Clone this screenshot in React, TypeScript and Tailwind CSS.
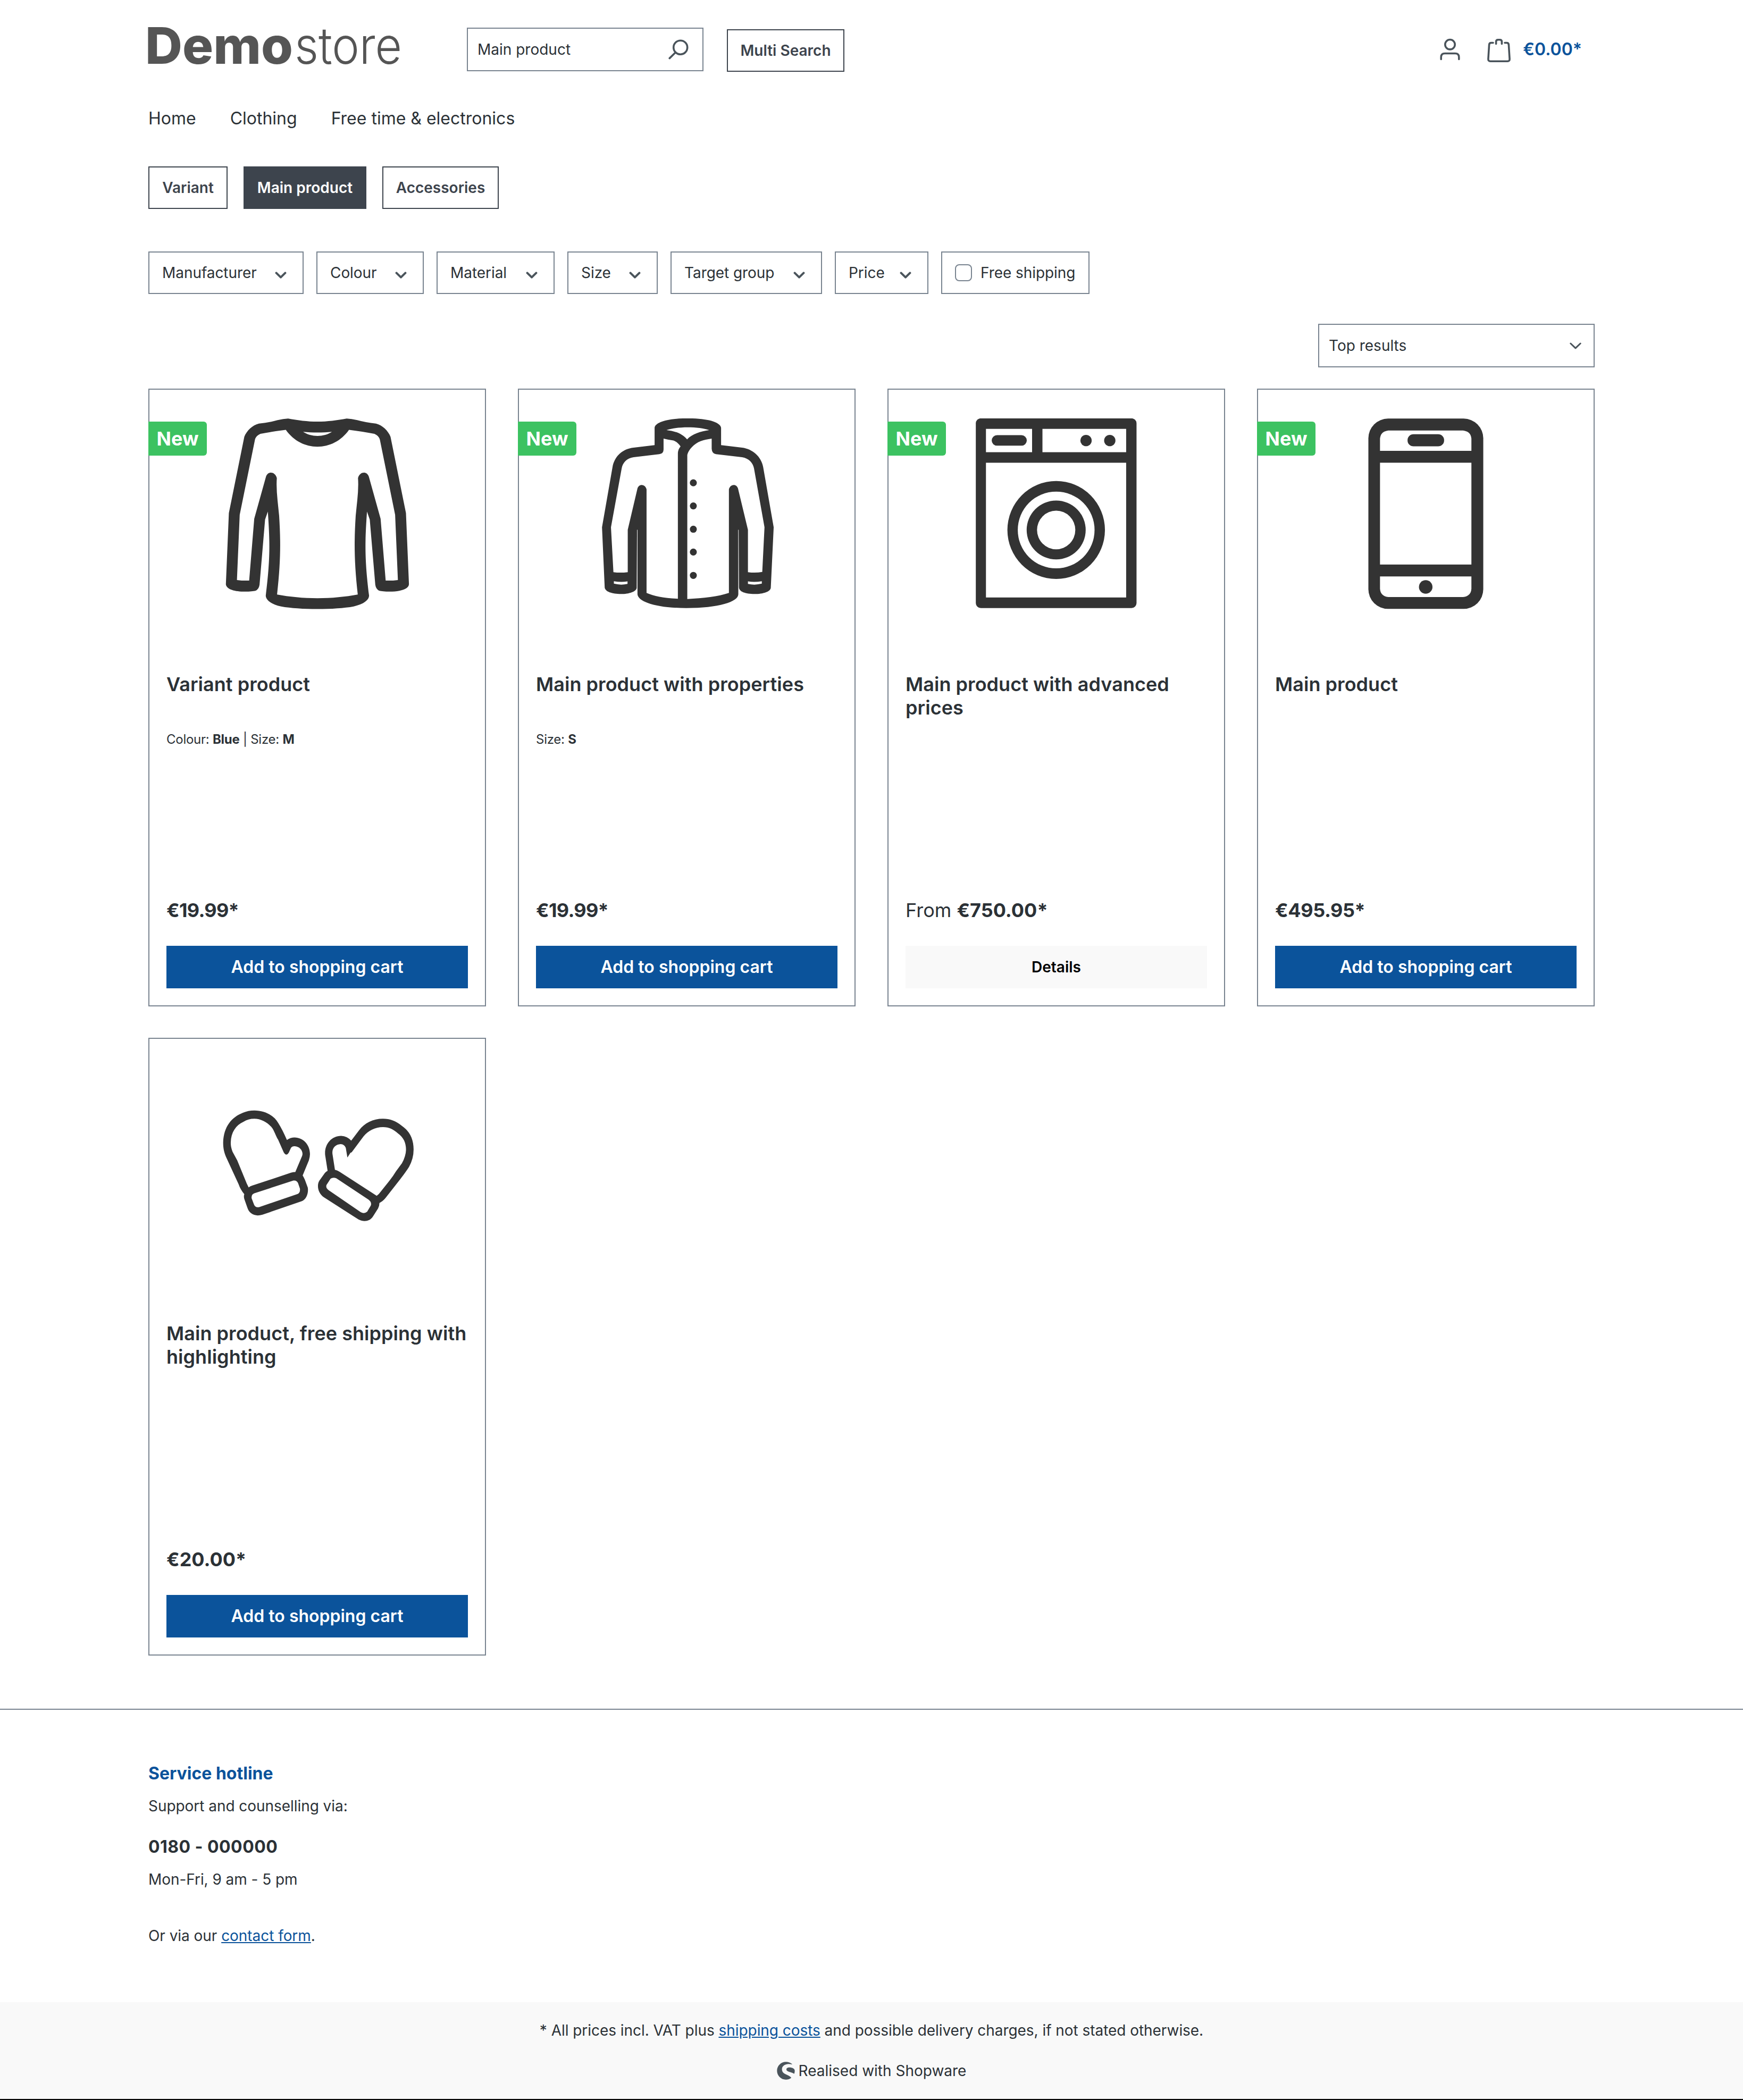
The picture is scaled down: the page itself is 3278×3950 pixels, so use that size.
import React from "react";

const INK = "#333333";

function Logo() {
  return (
    <svg width="476" height="96" viewBox="0 0 476 96" className="block overflow-visible" fill="#555555">
      <text x="-6" y="70" fontSize="95" fontWeight="850" textLength="278" lengthAdjust="spacingAndGlyphs">
        Demo
      </text>
      <text x="275" y="70" fontSize="95" fontWeight="320" textLength="202" lengthAdjust="spacingAndGlyphs">
        store
      </text>
    </svg>
  );
}

function SearchIcon() {
  return (
    <svg width="44" height="44" viewBox="0 0 44 44" fill="none" stroke="#4a545b" strokeWidth="3.6" strokeLinecap="round">
      <circle cx="25.7" cy="18.2" r="13" />
      <path d="M16 28 L5.2 38.6" />
    </svg>
  );
}

function UserIcon() {
  return (
    <svg width="44" height="44" viewBox="0 0 44 44" fill="none" stroke="#4a545b" strokeWidth="3.6" strokeLinecap="round">
      <circle cx="22" cy="11.7" r="9.2" />
      <path d="M5.2 39.5 V35.5 Q5.2 28.5 12.2 28.5 H31.8 Q38.8 28.5 38.8 35.5 V39.5" />
    </svg>
  );
}

function BagIcon() {
  return (
    <svg width="44" height="46" viewBox="0 0 44 46" fill="none" stroke="#4a545b" strokeWidth="3.6" strokeLinecap="round" strokeLinejoin="round">
      <path d="M11 8.5 H7.5 Q3.8 8.5 3.6 12.2 L1.9 39 Q1.8 43.2 5.8 43.2 H38.2 Q42.2 43.2 42.1 39 L40.4 12.2 Q40.2 8.5 36.5 8.5 H33" />
      <path d="M16.6 10.5 V6.5 Q16.6 2.8 20.3 2.8 H23.7 Q27.4 2.8 27.4 6.5 V10.5" />
    </svg>
  );
}

function ShopwareIcon() {
  return (
    <svg width="34" height="34" viewBox="0 0 34 34" fill="#4a545b">
      <path d="M28.5 4.2 C25.3 1.7 21.3 0.3 17 0.3 C7.8 0.3 0.3 7.8 0.3 17 C0.3 26.2 7.8 33.7 17 33.7 C20.8 33.7 24 32.6 26.6 30.7 C27 30.3 26.8 29.8 26.5 29.3 C23.8 26.4 20 25.2 16.5 23.5 C12.5 21.5 9.6 19 9.6 14 C9.6 7.6 16 4.2 22 4.2 C24.3 4.2 26.3 4.6 28.2 5.1 Q29 5 28.5 4.2 Z" />
      <path d="M32.5 22.8 C33.4 21 33.8 18.7 33.6 16.2 C33.3 14.5 32.6 13.7 31.5 12.9 C29 11.2 26 10.8 23.5 10.8 C20.5 10.8 18 12 18 14.5 C18 17.5 21.5 18.4 25 19.6 C28 20.6 30.6 21.4 32.5 22.8 Z" />
    </svg>
  );
}

function Chevron({ thin = false }: { thin?: boolean }) {
  return (
    <svg
      width="22"
      height="13"
      viewBox="0 0 22 13"
      fill="none"
      stroke="#4a545b"
      strokeWidth={thin ? 3 : 4}
      strokeLinecap="round"
      strokeLinejoin="round"
      className="block shrink-0"
    >
      <path d={thin ? "M1.8 2 L11 10.8 L20.2 2" : "M2.6 2.4 L11 10.6 L19.4 2.4"} />
    </svg>
  );
}

function Picture({ viewBox, children }: { viewBox: string; children: React.ReactNode }) {
  return (
    <svg viewBox={viewBox} preserveAspectRatio="none" fill={INK} fillRule="evenodd" className="block h-[360px] w-[567px]">
      {children}
    </svg>
  );
}

function Shirt() {
  return (
    <Picture viewBox="122.2 367.7 1307.5 672">
      <path
        d="M650 368 C692 374 733 379 777 379 C821 379 862 374 904 368 Q925 369 950 374 Q985 382 1031 386 C1059 391 1084 412 1094 432 L1161 700 L1174 950 C1172 968 1135 976 1091 976 C1069 976 1054 974 1046 973 Q1031 968 1028 952 L1004 723 L992 695 C983 800 981 860 1001 990 C1001 1005 979 1020 934 1028 C855 1040 699 1040 620 1028 C575 1020 553 1005 553 990 C573 860 571 800 562 695 L550 723 L526 952 Q523 968 508 973 C500 974 485 976 463 976 C420 976 382 968 380 950 L393 700 L460 432 C470 412 495 391 523 386 Q569 382 604 374 Q629 369 650 368 Z
        M640 408 Q580 414 530 422 C518 426 508 434 506 443 L440 706 L428 935 Q455 938 481 937 L503 720 L554 572 C562 553 592 553 601 577 C597 620 606 665 611 710 C618 800 618 870 602 986 C655 994 715 999 777 999 C839 999 899 994 952 986 C936 870 936 800 943 710 C948 665 957 620 953 577 C962 553 992 553 1000 572 L1051 720 L1073 937 Q1099 938 1126 935 L1114 706 L1048 443 C1046 434 1036 426 1024 422 Q974 414 914 408 C879 448 829 467 777 467 C725 467 675 448 640 408 Z
        M715 415 C755 418 800 418 840 415 C805 434 750 434 715 415 Z"
      />
    </Picture>
  );
}

function Jacket() {
  return (
    <Picture viewBox="114 184.3 1347 762.8">
      <path
        d="M644 222 C646 200 700 184 792 184 C884 184 939 200 941 222 L941 291 L1035 301 C1080 306 1120 335 1129 378 L1176 618 L1163 860 C1160 875 1130 884 1090 884 C1050 884 1022 875 1021 858 L1019.5 628 L1017.5 628 L1018 885 C1018 915 930 940 785 940 C650 940 570 915 567.5 885 L567.5 628 L565.5 628 L564 860 C561 875 530 884 494 884 C455 884 423 875 421 858 L409 618 L456 378 C465 335 500 306 550 301 L644 291 Z
        M684 265 L684 308 Q684 324 665 327 L550 339 C520 343 502 360 497 383 L449 618 L460 797 Q490 801 524 797 L524 628 L567 465 C572 444 602 444 608 467 L608 880 C640 893 690 901 748 903 L748 325 C748 312 754 302 760 296 C750 284 740 276 728 272 Q705 270 684 265 Z
        M899 265 L899 305 Q900 324 918 327 L1035 339 C1065 343 1083 362 1088 383 L1135 618 L1125 796 Q1095 801 1061 797 L1061 628 L1017 465 C1012 444 982 444 976 467 L976 880 C930 894 860 902 790 904 L790 330 C795 310 820 285 850 275 Q870 269 899 265 Z
        M697 231 C745 216 840 216 888 231 C850 236 812 246 789 268 C766 244 735 235 697 231 Z
        M462 833 Q492 838 523 834 L523 844 Q492 850 462 843 Z
        M1061 834 Q1092 838 1123 833 L1123 843 Q1092 850 1061 844 Z"
      />
      {[441, 533, 626, 717, 810].map((y) => (
        <ellipse key={y} cx="817" cy={y} rx="15.5" ry="14" />
      ))}
    </Picture>
  );
}

function Washer() {
  return (
    <Picture viewBox="122.2 184.3 1307.5 762.8">
      <rect x="427" y="184" width="697" height="756" rx="22" ry="20" />
      <g fill="#fff">
        <rect x="471" y="226" width="200" height="93" />
        <rect x="716" y="226" width="363" height="93" />
        <rect x="471" y="361" width="608" height="537" />
      </g>
      <rect x="496" y="251" width="152" height="42" rx="23" ry="21" />
      <ellipse cx="905" cy="272.5" rx="24.5" ry="22.5" />
      <ellipse cx="1008" cy="272.5" rx="24.5" ry="22.5" />
      <ellipse cx="775.5" cy="629" rx="211.5" ry="195" />
      <ellipse cx="775.5" cy="629" rx="166.5" ry="153" fill="#fff" />
      <ellipse cx="775.5" cy="629" rx="128" ry="117.5" />
      <ellipse cx="775.5" cy="629" rx="83" ry="77" fill="#fff" />
    </Picture>
  );
}

function Phone() {
  return (
    <Picture viewBox="130 441.3 1270 806.4">
      <rect x="523" y="442" width="484" height="802" rx="83" />
      <g fill="#fff">
        <path d="M572 578 V527 Q574 496 607 492 H922 Q955 496 957 527 V578 Z" />
        <rect x="572" y="628" width="385" height="429" />
        <path d="M572 1107 V1159 Q574 1190 607 1194 H922 Q955 1190 957 1159 V1107 Z" />
      </g>
      <rect x="688" y="508" width="154" height="51" rx="25" />
      <circle cx="764.5" cy="1151.5" r="28.5" />
    </Picture>
  );
}

function Mittens() {
  return (
    <Picture viewBox="103.9 804.8 1111.3 830.2">
      <path
        d="M428 991 C467 991 500 1013 516 1045 Q532 1075 548 1119 C558 1111 567 1108 576 1108 C608 1108 633 1140 633 1180 Q633 1192 629 1207 L606 1273 Q610 1280 614 1291 L625 1326 C628 1350 620 1378 602 1385 L458 1443 C430 1453 409 1439 402 1412 L391 1375 Q388 1362 391 1354 Q377 1335 370 1311 L323 1191 C315 1168 313 1150 313 1130 C315 1060 345 1020 386 1001 Q405 991 428 991 Z
        M428 1027 C455 1027 485 1048 498 1075 C508 1100 512 1112 515 1116 L536 1172 Q546 1192 555 1174 L563 1153 Q568 1145 577 1146 C597 1147 610 1170 604 1188 L579 1258 Q572 1258 563 1261 L420 1317 Q412 1320 407 1325 Q403 1315 400 1308 L365 1208 L348 1171 C343 1155 341 1145 341 1130 C342 1085 360 1055 388 1040 Q405 1027 428 1027 Z
        M572 1295 L428 1350 Q416 1355 418 1372 L427 1400 Q432 1414 446 1410 L585 1354 Q598 1350 596 1330 L589 1306 Q584 1293 572 1295 Z"
      />
      <path
        d="M902 1027 C928 1027 950 1037 970 1056 C1000 1080 1015 1115 1015 1160 Q1015 1200 998 1236 Q985 1260 965 1290 L912 1370 Q902 1385 889 1392 Q889 1405 884 1416 L864 1453 C853 1472 832 1476 812 1464 L685 1368 C662 1350 657 1315 668 1295 L688 1262 Q692 1257 698 1253 L689 1185 C685 1140 710 1102 748 1101 Q770 1102 785 1122 L814 1077 C835 1045 865 1027 902 1027 Z
        M902 1063 C925 1063 940 1073 957 1090 C978 1108 987 1130 987 1162 Q986 1190 972 1220 L950 1255 Q940 1275 925 1297 L887 1353 L879 1361 L742 1257 Q734 1250 725 1248 L716 1180 C713 1155 727 1138 746 1137 Q760 1138 765 1153 L771 1195 L782 1175 L787 1172 L830 1104 C848 1078 873 1063 902 1063 Z
        M709 1287 L694 1314 Q690 1326 702 1337 L820 1432 Q833 1441 844 1430 L857 1404 Q862 1390 849 1378 L730 1285 Q718 1280 709 1287 Z"
      />
    </Picture>
  );
}

type Product = {
  name: string;
  picture: React.ReactNode;
  isNew?: boolean;
  variant?: React.ReactNode;
  from?: boolean;
  price: string;
  priceTracking?: string;
};

const products: Product[] = [
  {
    name: "Variant product",
    picture: <Shirt />,
    isNew: true,
    variant: (
      <>
        Colour: <b>Blue</b> | Size: <b>M</b>
      </>
    ),
    price: "€19.99*",
    priceTracking: "tracking-[-0.7px]",
  },
  {
    name: "Main product with properties",
    picture: <Jacket />,
    isNew: true,
    variant: (
      <>
        Size: <b>S</b>
      </>
    ),
    price: "€19.99*",
    priceTracking: "tracking-[-0.7px]",
  },
  { name: "Main product with advanced prices", picture: <Washer />, isNew: true, from: true, price: "€750.00*" },
  {
    name: "Main product",
    picture: <Phone />,
    isNew: true,
    price: "€495.95*",
    priceTracking: "tracking-[-0.4px]",
  },
  { name: "Main product, free shipping with highlighting", picture: <Mittens />, price: "€20.00*" },
];

function ProductCard({ product }: { product: Product }) {
  return (
    <article className="relative flex h-[1162px] flex-col border-2 border-[#798490] px-8 pt-[54px] pb-8">
      {product.isNew && (
        <span className="absolute top-[60px] -left-0.5 flex h-16 w-[110px] items-center justify-center rounded-r-[6px] bg-[#3cc261] text-[36px] font-bold text-white">
          New
        </span>
      )}
      {product.picture}
      <h2 className="mt-[118px] h-[88px] text-[36px] leading-[44px] font-semibold tracking-[0.04px]">{product.name}</h2>
      <p className="mt-5 text-[24px] leading-9 tracking-[-0.26px]">{product.variant}</p>
      <p className="mt-auto text-[36px] leading-[54px] tracking-normal">
        {product.from && "From "}
        <b className={product.priceTracking}>{product.price}</b>
      </p>
      {product.from ? (
        <button className="mt-[40px] h-20 shrink-0 bg-[#f9f9f9] text-[28px] font-semibold text-black">Details</button>
      ) : (
        <button className="mt-[40px] h-20 shrink-0 bg-[#0b539b] text-[32px] font-semibold text-white">
          Add to shopping cart
        </button>
      )}
    </article>
  );
}

const filters = [
  { label: "Manufacturer", width: "w-[292px]" },
  { label: "Colour", width: "w-[202px]" },
  { label: "Material", width: "w-[222px]" },
  { label: "Size", width: "w-[170px]" },
  { label: "Target group", width: "w-[285px]" },
  { label: "Price", width: "w-[176px]" },
];

export default function App() {
  return (
    <div className="flex h-[3950px] w-[3278px] flex-col bg-white font-['Inter',sans-serif] text-[28px] leading-[42px] text-[#2b3136]">
      <div className="mx-auto w-[2720px]">
        <header className="flex h-[152px] items-start pt-[50px]">
          <Logo />
          <div className="mt-0.5 ml-[123px] flex h-[82px] w-[445px] items-center justify-between border-2 border-[#798490] pr-[23px] pl-[18px]">
            <span>Main product</span>
            <SearchIcon />
          </div>
          <button className="mt-[5px] ml-[44px] h-20 w-[221px] border-2 border-[#3d444d] font-semibold text-[#3d444d]">
            Multi Search
          </button>
          <div className="mt-[22px] mr-[24px] ml-auto flex items-start">
            <UserIcon />
            <div className="w-[48px]" />
            <BagIcon />
            <span className="ml-[23px] text-[32px] leading-[42px] font-semibold text-[#0b539b]">€0.00*</span>
          </div>
        </header>
        <nav className="flex h-[161px] items-start gap-16 pt-[47px] text-[32px] leading-12">
          <a>Home</a>
          <a>Clothing</a>
          <a>Free time &amp; electronics</a>
        </nav>
        <div className="flex h-20 gap-[30px] font-semibold text-[#3d444d]">
          <button className="w-[149px] border-2 border-[#3d444d]">Variant</button>
          <button className="w-[231px] bg-[#3d444d] text-white">Main product</button>
          <button className="w-[219px] border-2 border-[#3d444d]">Accessories</button>
        </div>
        <div className="mt-20 flex h-20 gap-6">
          {filters.map((f) => (
            <div
              key={f.label}
              className={`flex items-center justify-between border-2 border-[#798490] pr-[30px] pl-6 tracking-[-0.06px] whitespace-nowrap ${f.width}`}
            >
              <span>{f.label}</span>
              <span className="pt-[8px]">
                <Chevron />
              </span>
            </div>
          ))}
          <label className="flex w-[279px] items-center gap-4 border-2 border-[#798490] pl-6 tracking-[-0.06px] whitespace-nowrap">
            <span className="block size-8 rounded-[8px] border-2 border-[#798490]" />
            Free shipping
          </label>
        </div>
        <div className="mt-14 flex justify-end">
          <div className="flex h-[82px] w-[520px] items-center justify-between border-2 border-[#798490] pr-[23px] pl-[18px]">
            <span>Top results</span>
            <Chevron thin />
          </div>
        </div>
        <main className="mt-10 grid grid-cols-4 gap-x-[60px] gap-y-[59px]">
          {products.map((p) => (
            <ProductCard key={p.name} product={p} />
          ))}
        </main>
      </div>
      <footer className="mt-[100px] flex flex-1 flex-col border-t-2 border-[#798490] tracking-[-0.05px]">
        <div className="mx-auto h-[550px] w-[2720px] pt-[96px]">
          <h3 className="text-[32px] leading-12 font-bold tracking-normal text-[#0b539b]">Service hotline</h3>
          <p className="mt-4">Support and counselling via:</p>
          <p className="mt-8 text-[32px] leading-12 font-bold tracking-[0.45px]">0180 - 000000</p>
          <p className="mt-4">Mon-Fri, 9 am - 5 pm</p>
          <p className="mt-16">
            Or via our <a className="text-[#0b539b] underline">contact form</a>.
          </p>
        </div>
        <div className="flex flex-1 flex-col items-center border-b-2 border-black bg-[#f9f9f9] pt-[32px]">
          <p>
            * All prices incl. VAT plus <a className="text-[#0b539b] underline">shipping costs</a> and possible delivery
            charges, if not stated otherwise.
          </p>
          <p className="mt-[34px] flex items-center gap-[7px] tracking-normal">
            <ShopwareIcon />
            Realised with Shopware
          </p>
        </div>
      </footer>
    </div>
  );
}
